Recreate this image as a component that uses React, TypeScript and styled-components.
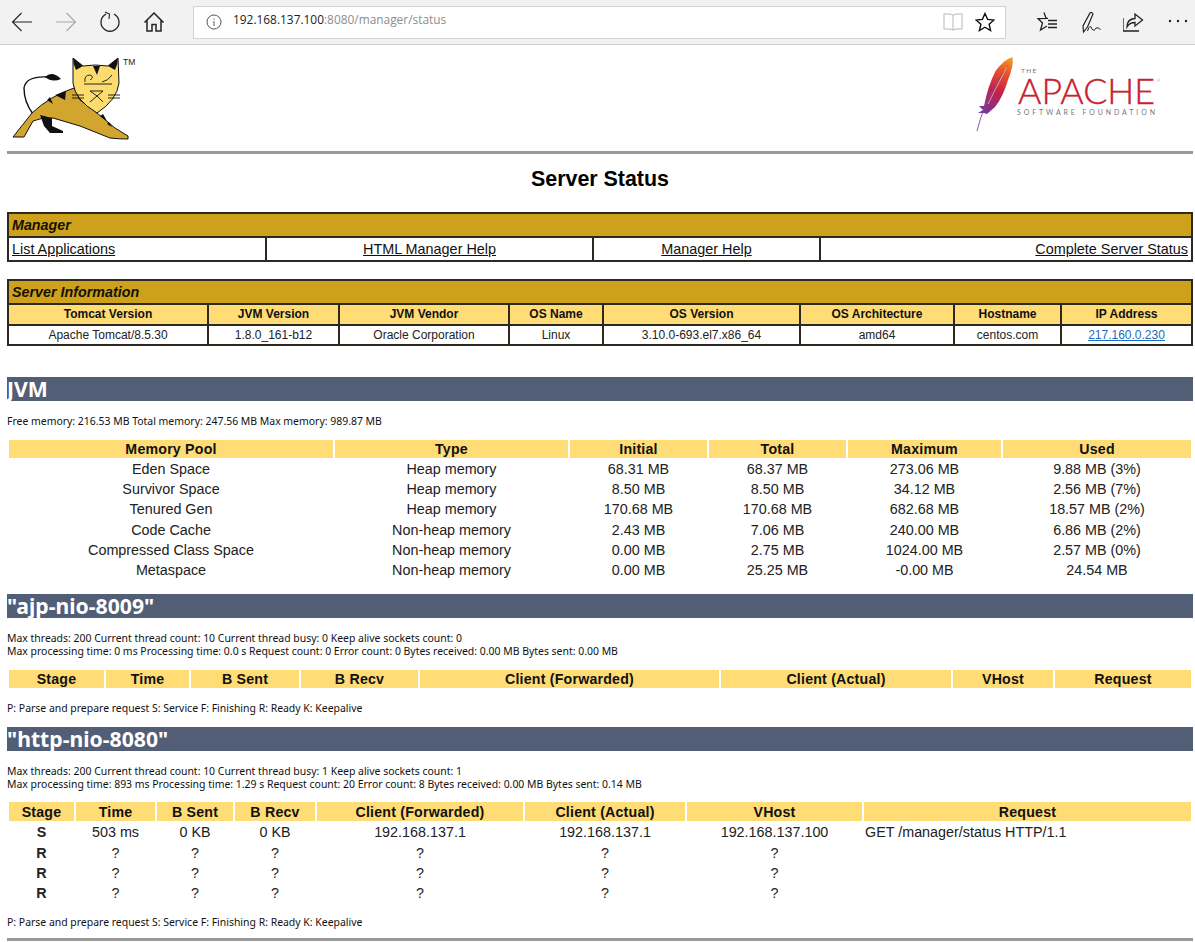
import React from "react";
import styled, { createGlobalStyle } from "styled-components";

const Global = createGlobalStyle`
  html, body { margin: 0; padding: 0; background: #fff; }
  body { font-family: "Liberation Sans", Arial, sans-serif; color: #000; overflow: hidden; }
`;

const Toolbar = styled.div`
  display: flex; align-items: center; height: 44px; background: #f2f2f2;
  border-bottom: 1px solid #cfcfcf;
`;
const NavButton = styled.div`
  width: 44px; height: 44px; display: flex; align-items: center; justify-content: center; flex: none;
`;
const AddressBox = styled.div`
  display: flex; align-items: center; width: 813px; height: 33px; margin: 0 19px 0 17px; flex: none;
  box-sizing: border-box; padding: 0 10px 0 12px; background: #fff; border: 1px solid #d2d2d2;
`;
const UrlText = styled.div`
  margin-left: 11px; padding-bottom: 6px; flex: 1; font: 11.9px "Open Sans", sans-serif; color: #222;
  span { color: #8e8e8e; }
`;
const AddressIcon = styled.div`
  width: 20px; height: 20px; margin-left: 12px; display: flex; align-items: center; justify-content: center;
`;

const Page = styled.div`
  padding: 0 2px 0 7px; width: 1186px;
`;
const LogoRow = styled.div`
  display: flex; justify-content: space-between; height: 106px; margin-left: -7px; width: 1195px;
`;
const TomcatLogo = styled.svg`
  width: 145px; height: 95px; margin-top: 5px;
`;
const ApacheLogo = styled.svg`
  width: 200px; height: 90px; margin: 5px 25px 0 0;
`;
const Rule = styled.div<{ $top?: number }>`
  height: 3px; background: #9a9a9a; margin-top: ${(p) => p.$top ?? 0}px;
`;
const PageTitle = styled.div`
  height: 50px; margin-bottom: 8px; display: flex; align-items: center; justify-content: center;
  font-size: 21.4px; font-weight: bold;
`;

const BoxTable = styled.table<{ $top?: number }>`
  width: 1186px; table-layout: fixed; border-collapse: collapse; border: 2px solid #2c2a20;
  margin-top: ${(p) => p.$top ?? 0}px;
  td, th { border: 2px solid #2c2a20; padding: 0; }
`;
const TitleCell = styled.td`
  height: 22px; padding: 0 0 0 3px !important; background: #cda11c; color: #161100;
  font: italic bold 14.3px "Liberation Sans", sans-serif; text-align: left;
`;
const MenuCell = styled.td<{ $align: string }>`
  height: 22px; padding: 0 3px !important; font-size: 14.4px; text-align: ${(p) => p.$align};
  a { color: #111; text-decoration: underline; }
`;
const InfoHead = styled.th`
  height: 18px; padding: 0 0 1px !important; background: #ffdc75; font-size: 12px; font-weight: bold; color: #111;
`;
const InfoCell = styled.td`
  height: 18px; font-size: 12px; text-align: center; color: #222;
  a { color: #1a6cc0; text-decoration: underline; }
`;

const SectionBar = styled.div<{ $top: number }>`
  height: 24px; margin-top: ${(p) => p.$top}px; background: #525d76; color: #fff;
  font: bold 21.2px/24px "Noto Sans", sans-serif; white-space: nowrap;
`;
const SmallText = styled.div<{ $top: number }>`
  margin-top: ${(p) => p.$top}px; font: 10.45px/13px "Noto Sans", sans-serif; color: #111; white-space: nowrap;
`;
const DataTable = styled.table<{ $top: number }>`
  width: 1186px; table-layout: fixed; border-collapse: separate; border-spacing: 2px;
  margin-top: ${(p) => p.$top}px;
`;
const ColWidth = styled.col<{ $w: number }>`
  width: ${(p) => p.$w}px;
`;
const DataHead = styled.th<{ $h: number }>`
  height: ${(p) => p.$h}px; padding: 0; background: #ffdc75; font-size: 14.2px; font-weight: bold; color: #111;
  letter-spacing: 0.2px;
`;
const DataCell = styled.td<{ $h: number; $bold?: boolean; $left?: boolean }>`
  height: ${(p) => p.$h}px; padding: 0 0 0 ${(p) => (p.$left ? 1 : 0)}px; font-size: 14.35px; line-height: 16px; color: #222;
  text-align: ${(p) => (p.$left ? "left" : "center")};
  font-weight: ${(p) => (p.$bold ? "bold" : "normal")};
`;

const Line = ({ children, w = 24, h = 24 }: { children: React.ReactNode; w?: number; h?: number }) => (
  <svg width={w} height={h} viewBox={`0 0 ${w} ${h}`} fill="none" stroke="currentColor" strokeWidth="1.1">
    {children}
  </svg>
);

const TomcatMark = () => (
  <TomcatLogo viewBox="0 0 145 95">
    <path d="M33 64Q24 52 24 38Q26 26 47 27" fill="none" stroke="#111" strokeWidth="1.4" />
    <path d="M45 27Q52 20 61 29Q52 33 45 27Z" fill="#111" />
    <path d="M13 87L32 63Q50 46 74 38L80 50L97 63L115 78L128 86L128 89Q118 89 110 88L80 76L53 68Q42 67 33 71L24 87Z" fill="#d2a52e" stroke="#111" strokeWidth="1" />
    <path d="M40 65L52 68L52 76L63 81L63 83L50 83L44 76Z" fill="#111" />
    <path d="M55 45L66 41L65 50ZM47 50L50 47L53 54ZM100 66L103 64L107 71ZM107 74L109 72L112 77Z" fill="#111" />
    <path d="M73 8L83 16Q95 14 108 16L118 8L119 33Q117 50 97 63Q75 50 73 33Z" fill="#fcdc6e" stroke="#111" strokeWidth="1" />
    <path d="M73 8L83 16L76 20Q73 14 73 8ZM118 8L108 16L115 20Q118 14 118 8ZM93 16L97 25L100 16Z" fill="#111" />
    <path d="M85 32Q84 25 90 25Q95 27 90 30M102 32Q108 31 112 25M84 34H112M72 45H84M72 48H84M108 45H120M108 48H120M90 41H103L97 46ZM90 52L97 46L103 52" fill="none" stroke="#111" strokeWidth="0.9" />
    <text x="123" y="15" fontFamily="Liberation Sans" fontSize="8.5" fill="#222">TM</text>
  </TomcatLogo>
);

const ApacheMark = () => (
  <ApacheLogo viewBox="0 0 200 90">
    <defs>
      <linearGradient id="feather" x1="42" y1="7" x2="14" y2="64" gradientUnits="userSpaceOnUse">
        <stop offset="0" stopColor="#f6a01e" />
        <stop offset="0.28" stopColor="#e9502a" />
        <stop offset="0.6" stopColor="#c41f4c" />
        <stop offset="1" stopColor="#6f3a9e" />
      </linearGradient>
    </defs>
    <path d="M42.5 7Q33 10 25 22Q18 36 14 56L9 56L13 60L8 63L14 63L17 64L25 57Q33 47 38 30Q44 16 42.5 7Z" fill="url(#feather)" />
    <path d="M7 81Q14 54 24 38Q30 26 38 16" fill="none" stroke="#7a4a9e" strokeWidth="0.9" />
    <path d="M18 54Q26 38 37 17" fill="none" stroke="#f8d0b0" strokeWidth="0.7" />
    <text x="51" y="23" fontFamily="Lato" fontSize="6.5" fill="#777" letterSpacing="1.4">THE</text>
    <text x="48" y="54" fontFamily="Lato" fontWeight="300" fontSize="35" fill="#c8202f" stroke="#c8202f" strokeWidth="0.35" textLength="137" lengthAdjust="spacingAndGlyphs">APACHE</text>
    <text x="187" y="32" fontFamily="Lato" fontSize="4" fill="#999">®</text>
    <text x="47" y="65" fontFamily="Lato" fontSize="7" fill="#777" textLength="138">SOFTWARE FOUNDATION</text>
  </ApacheLogo>
);

const memoryCols = [324, 233, 137, 137, 153, 188];
const ajpCols = [95, 83, 108, 117, 299, 230, 100, 136];
const httpCols = [65, 79, 76, 80, 206, 160, 175, 327];
const threadHead = ["Stage", "Time", "B Sent", "B Recv", "Client (Forwarded)", "Client (Actual)", "VHost", "Request"];
const memoryRows = [
  ["Eden Space", "Heap memory", "68.31 MB", "68.37 MB", "273.06 MB", "9.88 MB (3%)"],
  ["Survivor Space", "Heap memory", "8.50 MB", "8.50 MB", "34.12 MB", "2.56 MB (7%)"],
  ["Tenured Gen", "Heap memory", "170.68 MB", "170.68 MB", "682.68 MB", "18.57 MB (2%)"],
  ["Code Cache", "Non-heap memory", "2.43 MB", "7.06 MB", "240.00 MB", "6.86 MB (2%)"],
  ["Compressed Class Space", "Non-heap memory", "0.00 MB", "2.75 MB", "1024.00 MB", "2.57 MB (0%)"],
  ["Metaspace", "Non-heap memory", "0.00 MB", "25.25 MB", "-0.00 MB", "24.54 MB"],
];
const httpRows = [
  ["S", "503 ms", "0 KB", "0 KB", "192.168.137.1", "192.168.137.1", "192.168.137.100", "GET /manager/status HTTP/1.1"],
  ["R", "?", "?", "?", "?", "?", "?", ""],
  ["R", "?", "?", "?", "?", "?", "?", ""],
  ["R", "?", "?", "?", "?", "?", "?", ""],
];
const menu: [string, string, number][] = [
  ["List Applications", "left", 258],
  ["HTML Manager Help", "center", 327],
  ["Manager Help", "center", 227],
  ["Complete Server Status", "right", 372],
];
const infoCols = [200, 131, 170, 94, 197, 154, 107, 131];
const infoHead = ["Tomcat Version", "JVM Version", "JVM Vendor", "OS Name", "OS Version", "OS Architecture", "Hostname", "IP Address"];
const infoRow = ["Apache Tomcat/8.5.30", "1.8.0_161-b12", "Oracle Corporation", "Linux", "3.10.0-693.el7.x86_64", "amd64", "centos.com"];
const legend = "P: Parse and prepare request S: Service F: Finishing R: Ready K: Keepalive";

const Cols = ({ widths }: { widths: number[] }) => (
  <colgroup>
    {widths.map((w, i) => (
      <ColWidth key={i} $w={w} />
    ))}
  </colgroup>
);

export default function App() {
  return (
    <>
      <Global />
      <Toolbar>
        <NavButton>
          <Line><path d="M22 12H2.5M11.5 3L2.5 12L11.5 21" stroke="#222" /></Line>
        </NavButton>
        <NavButton>
          <Line><path d="M2 12H21.5M12.5 3L21.5 12L12.5 21" stroke="#a8a8a8" /></Line>
        </NavButton>
        <NavButton>
          <Line>
            <path d="M8 4.2A9 9 0 1 0 16 4.2" stroke="#222" strokeWidth="1.3" />
            <path d="M4 1.5L8.5 3.5L8 8.5" stroke="#222" strokeWidth="1.1" transform="translate(3 0.5)" />
          </Line>
        </NavButton>
        <NavButton>
          <Line>
            <path d="M2.5 12.5L12 3L21.5 12.5M5 10V21H10V14.5H14V21H19V10" stroke="#222" strokeWidth="1.5" />
          </Line>
        </NavButton>
        <AddressBox>
          <svg width="16" height="16" viewBox="0 0 16 16" fill="none" stroke="#555">
            <circle cx="8" cy="8" r="7" />
            <path d="M8 7V12M8 4.5V5.6" />
          </svg>
          <UrlText>
            192.168.137.100<span>:8080/manager/status</span>
          </UrlText>
          <AddressIcon>
            <svg width="20" height="20" viewBox="0 0 20 20" fill="none" stroke="#c4c4c4" strokeWidth="1.2">
              <path d="M10 3Q6 1.5 1 2V17Q6 16.5 10 18Q14 16.5 19 17V2Q14 1.5 10 3ZM10 3V18" />
            </svg>
          </AddressIcon>
          <AddressIcon>
            <svg width="20" height="20" viewBox="0 0 20 20" fill="none" stroke="#111" strokeWidth="1.4">
              <path d="M10 1.5L12.6 7.4L19 8L14.1 12.2L15.6 18.5L10 15.2L4.4 18.5L5.9 12.2L1 8L7.4 7.4Z" />
            </svg>
          </AddressIcon>
        </AddressBox>
        <NavButton>
          <Line>
            <path d="M9 2.5L11 8.3L3 8.5L7.5 13L5.5 20L12 16M11 8.3H13" stroke="#222" strokeWidth="1.3" />
            <path d="M13 10.5H22M13 14H22M13 17.5H22" stroke="#222" strokeWidth="1.3" />
          </Line>
        </NavButton>
        <NavButton>
          <Line>
            <path d="M4.5 22L4 16L11 3Q13 1.5 14 4L8.5 17Z" stroke="#222" strokeWidth="1.2" />
            <path d="M8.5 21Q11 13 13 19Q15 22 17 18Q19 17 21.5 19.5" stroke="#222" strokeWidth="1" />
          </Line>
        </NavButton>
        <NavButton>
          <Line>
            <path d="M2 8V21H18" stroke="#222" strokeWidth="1.3" transform="translate(-2 0)" />
            <path d="M6 17Q6 9 14 8.5V4L21.5 10L14 16V12.5Q8.5 12.5 6 17Z" stroke="#222" strokeWidth="1.3" transform="translate(-2 0)" />
          </Line>
        </NavButton>
        <NavButton>
          <Line>
            <g fill="#222" stroke="none">
              <circle cx="3" cy="11" r="1.2" />
              <circle cx="11" cy="11" r="1.2" />
              <circle cx="19" cy="11" r="1.2" />
            </g>
          </Line>
        </NavButton>
      </Toolbar>
      <Page>
        <LogoRow>
          <TomcatMark />
          <ApacheMark />
        </LogoRow>
        <Rule />
        <PageTitle>Server Status</PageTitle>

        <BoxTable>
          <Cols widths={menu.map((m) => m[2])} />
          <tbody>
            <tr><TitleCell colSpan={4}>Manager</TitleCell></tr>
            <tr>
              {menu.map(([label, align]) => (
                <MenuCell key={label} $align={align}><a href="#">{label}</a></MenuCell>
              ))}
            </tr>
          </tbody>
        </BoxTable>

        <BoxTable $top={17}>
          <Cols widths={infoCols} />
          <tbody>
            <tr><TitleCell colSpan={8}>Server Information</TitleCell></tr>
            <tr>{infoHead.map((h) => <InfoHead key={h}>{h}</InfoHead>)}</tr>
            <tr>
              {infoRow.map((c) => <InfoCell key={c}>{c}</InfoCell>)}
              <InfoCell><a href="#">217.160.0.230</a></InfoCell>
            </tr>
          </tbody>
        </BoxTable>

        <SectionBar $top={31}>JVM</SectionBar>
        <SmallText $top={14}>Free memory: 216.53 MB Total memory: 247.56 MB Max memory: 989.87 MB</SmallText>
        <DataTable $top={10}>
          <Cols widths={memoryCols} />
          <thead>
            <tr>
              {["Memory Pool", "Type", "Initial", "Total", "Maximum", "Used"].map((h) => (
                <DataHead key={h} $h={18}>{h}</DataHead>
              ))}
            </tr>
          </thead>
          <tbody>
            {memoryRows.map((r) => (
              <tr key={r[0]}>{r.map((c, i) => <DataCell key={i} $h={18.2}>{c}</DataCell>)}</tr>
            ))}
          </tbody>
        </DataTable>

        <SectionBar $top={13}>"ajp-nio-8009"</SectionBar>
        <SmallText $top={14}>
          Max threads: 200 Current thread count: 10 Current thread busy: 0 Keep alive sockets count: 0<br />
          Max processing time: 0 ms Processing time: 0.0 s Request count: 0 Error count: 0 Bytes received: 0.00 MB Bytes sent: 0.00 MB
        </SmallText>
        <DataTable $top={10}>
          <Cols widths={ajpCols} />
          <thead>
            <tr>{threadHead.map((h) => <DataHead key={h} $h={18}>{h}</DataHead>)}</tr>
          </thead>
        </DataTable>
        <SmallText $top={12}>{legend}</SmallText>

        <SectionBar $top={12}>"http-nio-8080"</SectionBar>
        <SmallText $top={14}>
          Max threads: 200 Current thread count: 10 Current thread busy: 1 Keep alive sockets count: 1<br />
          Max processing time: 893 ms Processing time: 1.29 s Request count: 20 Error count: 8 Bytes received: 0.00 MB Bytes sent: 0.14 MB
        </SmallText>
        <DataTable $top={9}>
          <Cols widths={httpCols} />
          <thead>
            <tr>{threadHead.map((h) => <DataHead key={h} $h={19}>{h}</DataHead>)}</tr>
          </thead>
          <tbody>
            {httpRows.map((r, ri) => (
              <tr key={ri}>
                {r.map((c, i) => (
                  <DataCell key={i} $h={18.4} $bold={i === 0} $left={i === 7}>{c}</DataCell>
                ))}
              </tr>
            ))}
          </tbody>
        </DataTable>
        <SmallText $top={11}>{legend}</SmallText>
        <Rule $top={9} />
      </Page>
    </>
  );
}
